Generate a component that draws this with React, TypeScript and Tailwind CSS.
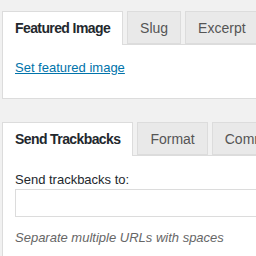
import React from "react";

function Tabs({ tabs }: { tabs: string[] }) {
  return (
    <div className="flex items-end pl-[2px] whitespace-nowrap">
      {tabs.map((t, i) =>
        i === 0 ? (
          <div
            key={t}
            className="relative z-10 mb-[-1px] h-[34px] border border-b-0 border-[#dcdcdc] bg-white px-3 pt-[7px] text-[14px] font-bold leading-[18px] tracking-[-0.6px] text-[#23282d]"
          >
            {t}
          </div>
        ) : (
          <div
            key={t}
            className="ml-1 h-[33px] border border-[#dcdcdc] bg-[#e9e9e9] px-3 pt-[7px] text-[14px] leading-[18px] text-[#555]"
          >
            {t}
          </div>
        )
      )}
    </div>
  );
}

export default function App() {
  return (
    <div
      className="h-[256px] w-[256px] overflow-hidden bg-[#f1f1f1] pt-[11px]"
      style={{ fontFamily: '"Liberation Sans", Arial, sans-serif' }}
    >
      <Tabs tabs={["Featured Image", "Slug", "Excerpt"]} />
      <div className="ml-[2px] w-[300px] border border-[#dcdcdc] bg-white px-3 pb-[20px] pt-[13px] text-[13px] leading-[20px]">
        <a href="#" className="text-[#0073aa] underline">
          Set featured image
        </a>
      </div>
      <div className="h-[23px]" />
      <Tabs tabs={["Send Trackbacks", "Format", "Comments"]} />
      <div className="ml-[2px] h-[200px] w-[300px] border border-[#dcdcdc] bg-white px-3 pt-[15px] text-[13px] leading-[18px]">
        <div className="text-[#23282d]">Send trackbacks to:</div>
        <div className="h-[28px] w-[300px] border border-[#dcdcdc] bg-white" />
        <div className="mt-[12px] italic text-[#666]">
          Separate multiple URLs with spaces
        </div>
      </div>
    </div>
  );
}
